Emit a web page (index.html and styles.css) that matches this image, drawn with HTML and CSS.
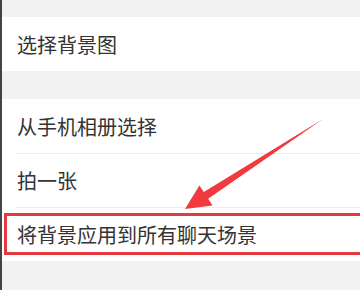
FILE: index.html
```html
<!DOCTYPE html>
<html lang="zh-CN">
<head>
<meta charset="utf-8">
<title>设置聊天背景</title>
<link rel="stylesheet" href="styles.css">
</head>
<body>
<div class="page">
  <div class="gap gap-top"></div>
  <div class="group">
    <div class="row">选择背景图</div>
  </div>
  <div class="gap gap-mid"></div>
  <div class="group">
    <div class="row">从手机相册选择</div>
    <div class="row">拍一张</div>
    <div class="row row-highlight">将背景应用到所有聊天场景<span class="highlight"></span></div>
  </div>
  <div class="gap gap-bottom"></div>
  <svg class="arrow" width="360" height="290" viewBox="0 0 360 290" aria-hidden="true">
    <polygon points="185,209 199.4,185.4 203.8,192.1 323,119 208.2,198.7 212.5,205.4" fill="#f03a3d"/>
  </svg>
</div>
</body>
</html>
```
FILE: styles.css
```css
html, body {
  margin: 0;
  padding: 0;
  background: #f2f2f2;
}
body {
  width: 360px;
  height: 290px;
  overflow: hidden;
  font-family: "Noto Sans CJK SC", "Noto Sans", sans-serif;
}
.page {
  position: relative;
  height: 290px;
  border-left: 2px solid #444;
  background: #f2f2f2;
  overflow: hidden;
}
.gap-top { height: 17px; }
.gap-mid { height: 28px; }
.gap-bottom { height: 29px; }
.group {
  background: #fff;
}
.row {
  position: relative;
  display: flex;
  align-items: center;
  height: 54px;
  padding-left: 15px;
  font-size: 20px;
  color: #333;
}
.row + .row::before {
  content: "";
  position: absolute;
  top: 0;
  left: 14px;
  right: 0;
  height: 1px;
  background: #ececec;
}
.highlight {
  position: absolute;
  top: 6px;
  bottom: 6px;
  left: 2px;
  right: 0;
  border: 3px solid #e23b3f;
  border-right: none;
}
.arrow {
  position: absolute;
  top: 0;
  left: -2px;
}
```
